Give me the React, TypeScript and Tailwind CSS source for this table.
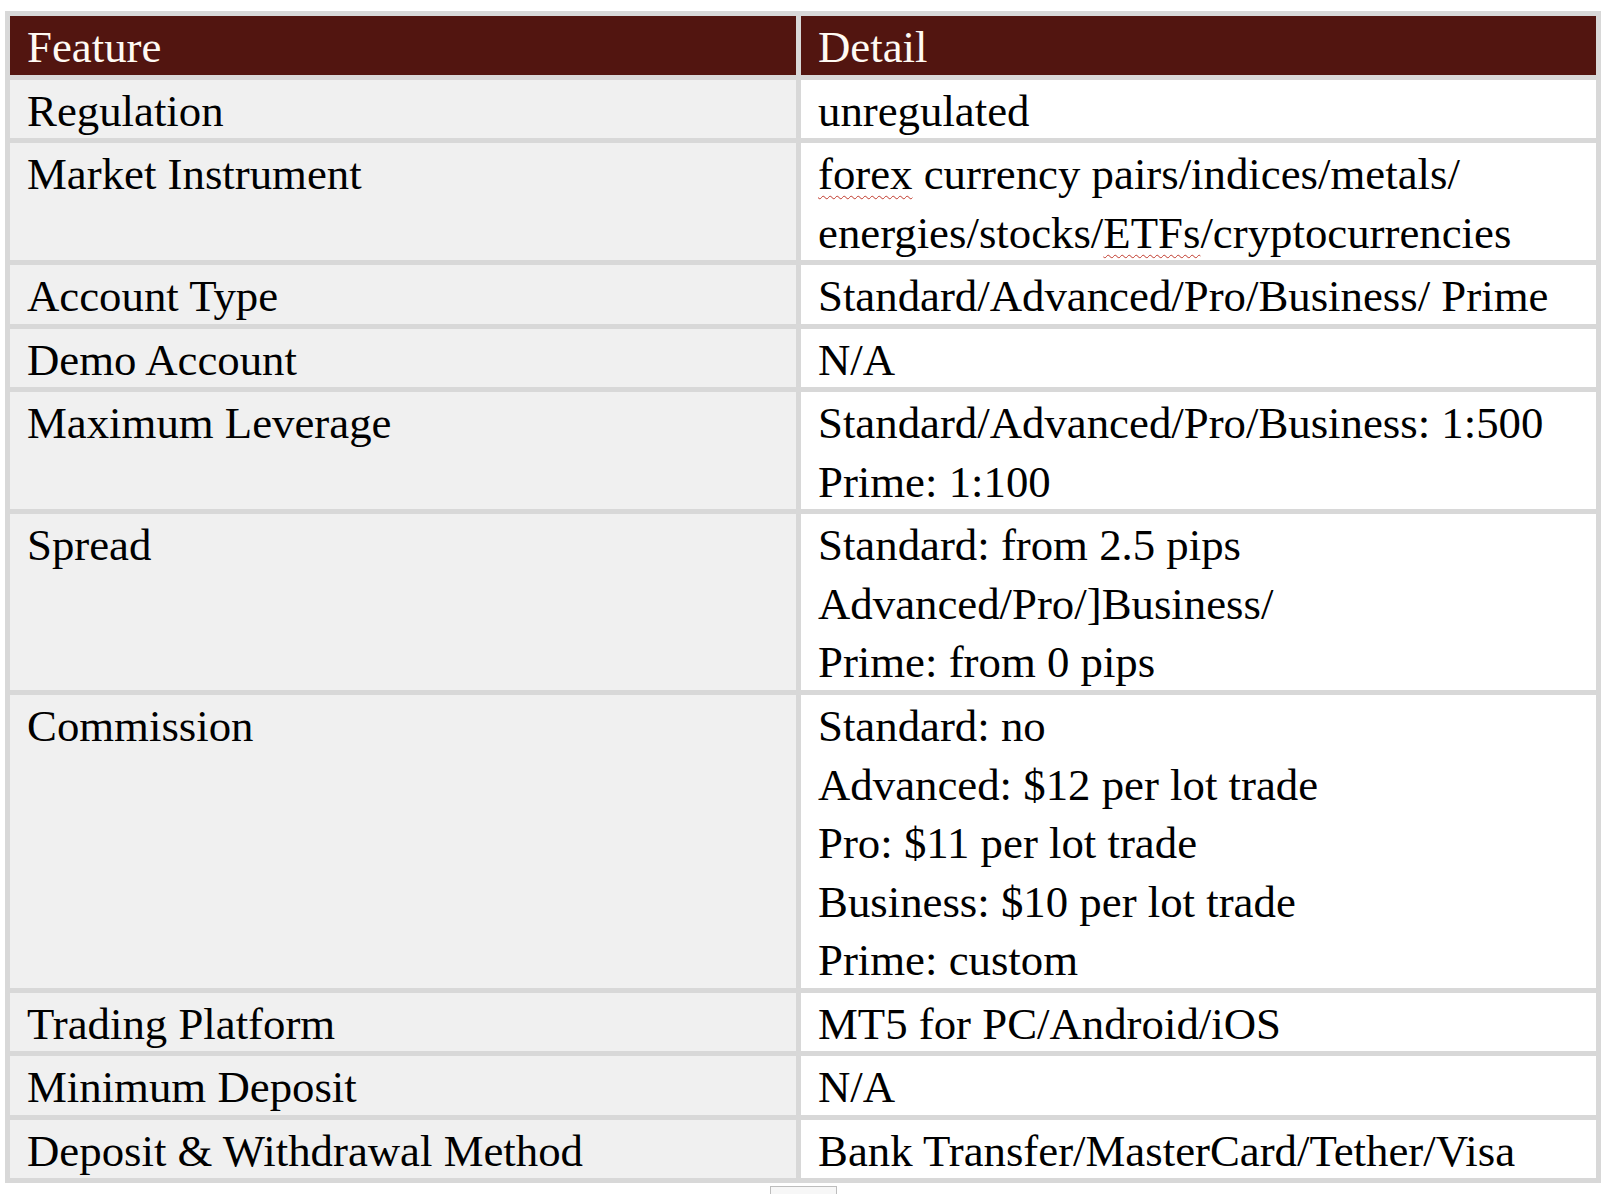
import React from "react"

const rows: { feature: string; detail: React.ReactNode[] }[] = [
  { feature: "Regulation", detail: ["unregulated"] },
  {
    feature: "Market Instrument",
    detail: [
      <>
        <span className="underline decoration-wavy decoration-[#c0392b] decoration-1 underline-offset-[6px]">forex</span>{" "}
        currency pairs/indices/metals/
      </>,
      <>
        energies/stocks/
        <span className="underline decoration-wavy decoration-[#c0392b] decoration-1 underline-offset-[6px]">ETFs</span>
        /cryptocurrencies
      </>,
    ],
  },
  { feature: "Account Type", detail: ["Standard/Advanced/Pro/Business/ Prime"] },
  { feature: "Demo Account", detail: ["N/A"] },
  { feature: "Maximum Leverage", detail: ["Standard/Advanced/Pro/Business: 1:500", "Prime: 1:100"] },
  { feature: "Spread", detail: ["Standard: from 2.5 pips", "Advanced/Pro/]Business/", "Prime: from 0 pips"] },
  {
    feature: "Commission",
    detail: [
      "Standard: no",
      "Advanced: $12 per lot trade",
      "Pro: $11 per lot trade",
      "Business: $10 per lot trade",
      "Prime: custom",
    ],
  },
  { feature: "Trading Platform", detail: ["MT5 for PC/Android/iOS"] },
  { feature: "Minimum Deposit", detail: ["N/A"] },
  { feature: "Deposit & Withdrawal Method", detail: ["Bank Transfer/MasterCard/Tether/Visa"] },
]

export default function App() {
  return (
    <div
      className="min-h-screen bg-white pt-[11px] pl-[5px] text-[44.8px] leading-[58.55px] text-black"
      style={{ fontFamily: '"Liberation Serif", "Times New Roman", serif' }}
    >
      {/* Table */}
      <div className="grid w-[1596px] grid-cols-[786px_795px] gap-[5px] bg-[#d8d8d8] p-[5px]">
        <div className="bg-[#521510] px-[17px] text-[#fffaf3]">
          <div className="translate-y-[2px]">Feature</div>
        </div>
        <div className="bg-[#521510] px-[17px] text-[#fffaf3]">
          <div className="translate-y-[2px]">Detail</div>
        </div>
        {rows.map((row) => (
          <React.Fragment key={row.feature}>
            <div className="bg-[#f0f0f0] px-[17px]">
              <div className="translate-y-[2px]">{row.feature}</div>
            </div>
            <div className="bg-white px-[17px]">
              <div className="translate-y-[2px]">
                {row.detail.map((line, i) => (
                  <div key={i}>{line}</div>
                ))}
              </div>
            </div>
          </React.Fragment>
        ))}
      </div>
      <div className="ml-[765px] mt-[3px] h-[8px] w-[67px] border-x border-t border-[#bdbdbd] bg-[#f7f7f7]" />
    </div>
  )
}
